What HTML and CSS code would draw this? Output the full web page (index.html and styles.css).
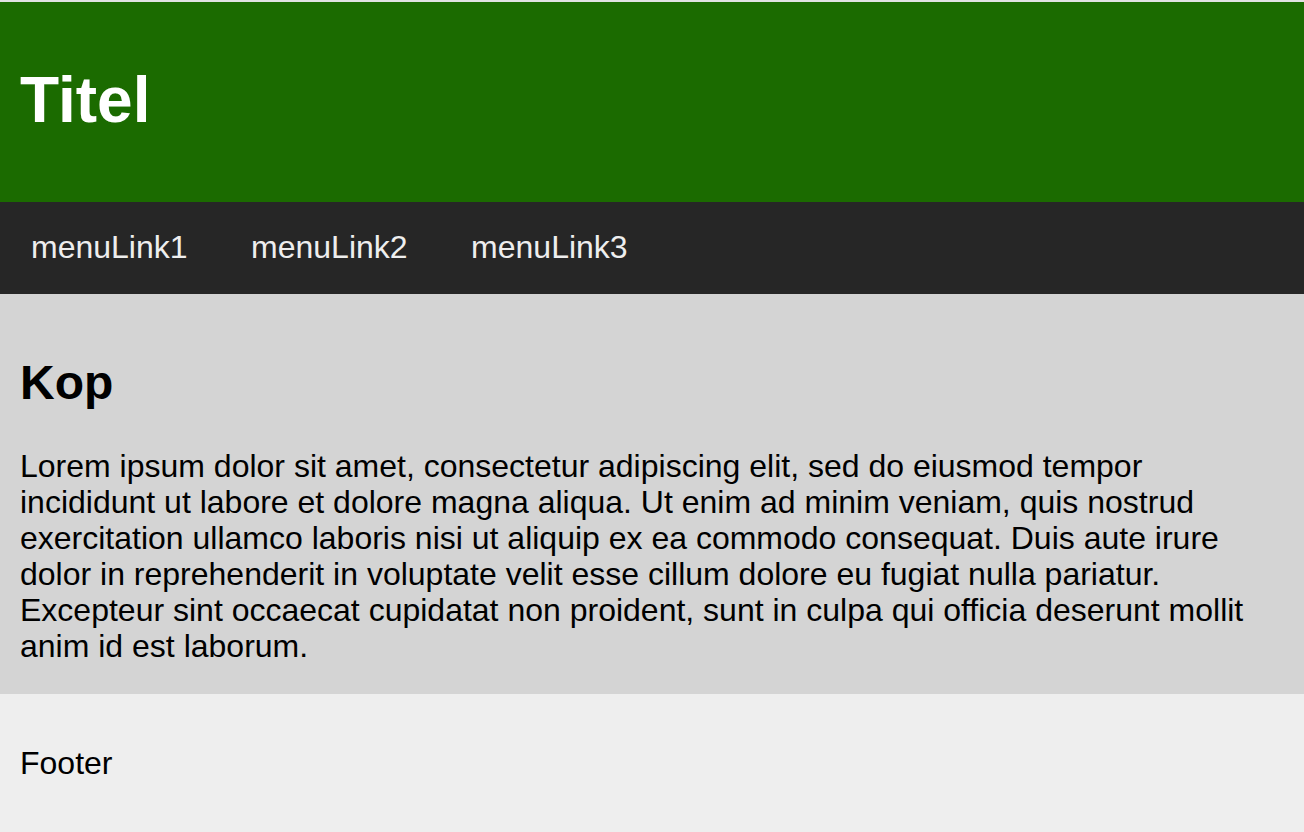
FILE: index.html
```html
<!DOCTYPE html>
<html lang="nl">
<head>
<meta charset="utf-8">
<title>Titel</title>
<link rel="stylesheet" href="styles.css">
</head>
<body>
<header class="site-header">
  <h1 class="site-title">Titel</h1>
</header>
<nav class="site-nav">
  <a class="nav-link" href="#">menuLink1</a>
  <a class="nav-link" href="#">menuLink2</a>
  <a class="nav-link" href="#">menuLink3</a>
</nav>
<main class="content">
  <h2 class="content-title">Kop</h2>
  <p class="content-text">Lorem ipsum dolor sit amet, consectetur adipiscing elit, sed do eiusmod tempor incididunt ut labore et dolore magna aliqua. Ut enim ad minim veniam, quis nostrud exercitation ullamco laboris nisi ut aliquip ex ea commodo consequat. Duis aute irure dolor in reprehenderit in voluptate velit esse cillum dolore eu fugiat nulla pariatur. Excepteur sint occaecat cupidatat non proident, sunt in culpa qui officia deserunt mollit anim id est laborum.</p>
</main>
<footer class="site-footer">
  <p class="footer-text">Footer</p>
</footer>
</body>
</html>
```
FILE: styles.css
```css
* { box-sizing: border-box; }
html, body { margin: 0; padding: 0; }
body {
  font-family: "Liberation Sans", Arial, sans-serif;
  font-size: 32px;
  line-height: 36px;
  color: #000;
  background: #eeeeee;
  border-top: 2px solid #e2e2e2;
}
.site-header {
  background: #1b6b00;
  height: 200px;
  padding: 62px 20px 0;
}
.site-title {
  margin: 0;
  font-size: 64px;
  line-height: 72px;
  font-weight: bold;
  color: #ffffff;
}
.site-nav {
  background: #262626;
  display: flex;
  gap: 63.5px;
  padding: 27px 0 29px 31px;
}
.nav-link {
  color: #eeeeee;
  text-decoration: none;
}
.content {
  background: #d4d4d4;
  padding: 61px 20px 30px;
}
.content-title {
  margin: 0 0 38px;
  font-size: 48px;
  line-height: 55px;
  font-weight: bold;
}
.content-text { margin: 0; }
.site-footer {
  background: #eeeeee;
  padding: 51px 20px;
}
.footer-text { margin: 0; }
```
